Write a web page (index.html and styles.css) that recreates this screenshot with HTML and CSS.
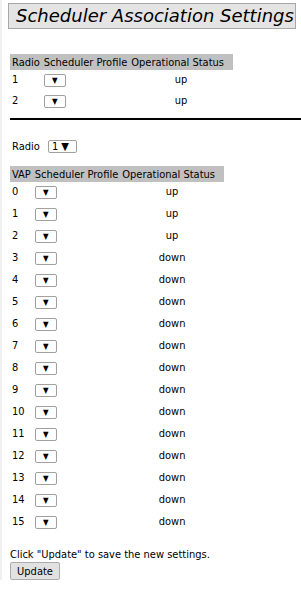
FILE: index.html
```html
<!DOCTYPE html>
<html lang="en">
<head>
    <meta charset="UTF-8">
    <title>Scheduler Association Settings</title>
    <link rel="stylesheet" href="styles.css">
</head>
<body>

    <div class="page-title">Scheduler Association Settings</div>

    <table class="assoc radio-table">
        <thead>
            <tr>
                <th>Radio</th>
                <th>Scheduler Profile</th>
                <th class="status-head">Operational Status</th>
            </tr>
        </thead>
        <tbody>
            <tr><td>1</td><td><span class="sel">&#9660;</span></td><td class="status">up</td></tr>
            <tr><td>2</td><td><span class="sel">&#9660;</span></td><td class="status">up</td></tr>
        </tbody>
    </table>

    <hr class="divider">

    <div class="radio-pick">
        Radio <span class="sel sel-radio">1 &#9660;</span>
    </div>

    <table class="assoc vap-table">
        <thead>
            <tr>
                <th>VAP</th>
                <th>Scheduler Profile</th>
                <th class="status-head">Operational Status</th>
            </tr>
        </thead>
        <tbody id="vapTable"></tbody>
    </table>

    <p class="hint">Click "Update" to save the new settings.</p>
    <button class="update-btn" type="button">Update</button>

    <script>
        const vapTable = document.getElementById("vapTable");
        for (let i = 0; i < 16; i++) {
            const row = document.createElement("tr");
            row.innerHTML = `
                <td>${i}</td>
                <td><span class="sel">&#9660;</span></td>
                <td class="status">${i < 3 ? "up" : "down"}</td>
            `;
            vapTable.appendChild(row);
        }
    </script>

</body>
</html>
```

FILE: styles.css
```css
body {
    margin: 0;
    padding: 3px 5px 0 8px;
    border-left: 2px solid #f0f0f0;
    font-family: "DejaVu Sans Condensed", "DejaVu Sans", sans-serif;
    font-size: 11px;
    color: #000;
    background: #fff;
}
.page-title {
    background: #e4e4e4;
    border: 1px solid #a8a8a8;
    font-family: "DejaVu Sans", Verdana, sans-serif;
    font-style: italic;
    font-size: 18px;
    line-height: 24px;
    padding-left: 7px;
    margin-left: -2px;
    white-space: nowrap;
    overflow: hidden;
}
.assoc {
    border-collapse: collapse;
    margin-top: 25px;
}
.assoc th {
    background: #c0c0c0;
    font-weight: normal;
    text-align: left;
    height: 16px;
    padding: 0 2px;
    white-space: nowrap;
}
.assoc th.status-head {
    padding-right: 9px;
}
.assoc td {
    height: 21px;
    padding: 4px 2px 0;
    vertical-align: top;
    box-sizing: border-box;
    line-height: 12px;
}
.vap-table {
    margin-top: 0;
}
.vap-table td {
    height: 22px;
    padding-top: 4px;
}
.status {
    text-align: center;
}
.sel {
    display: inline-block;
    width: 20px;
    height: 11px;
    border: 1px solid #a0a0a0;
    border-radius: 2px;
    font-size: 8px;
    line-height: 11px;
    text-align: center;
    background: #fff;
}
.divider {
    border: none;
    border-top: 2px solid #000;
    margin: 6px -5px 0 0;
}
.radio-pick {
    margin: 20px 0 13px 2px;
}
.sel-radio {
    width: 24px;
    font-size: 11px;
    margin-left: 5px;
    text-align: left;
    padding-left: 3px;
}
.hint {
    margin: 14px 0 1px 0;
}
.update-btn {
    font-family: "DejaVu Sans Condensed", "DejaVu Sans", sans-serif;
    font-size: 11px;
    width: 50px;
    height: 18px;
    padding: 0;
    background: #e1e1e1;
    border: 1px solid #adadad;
    border-radius: 2px;
}
```
